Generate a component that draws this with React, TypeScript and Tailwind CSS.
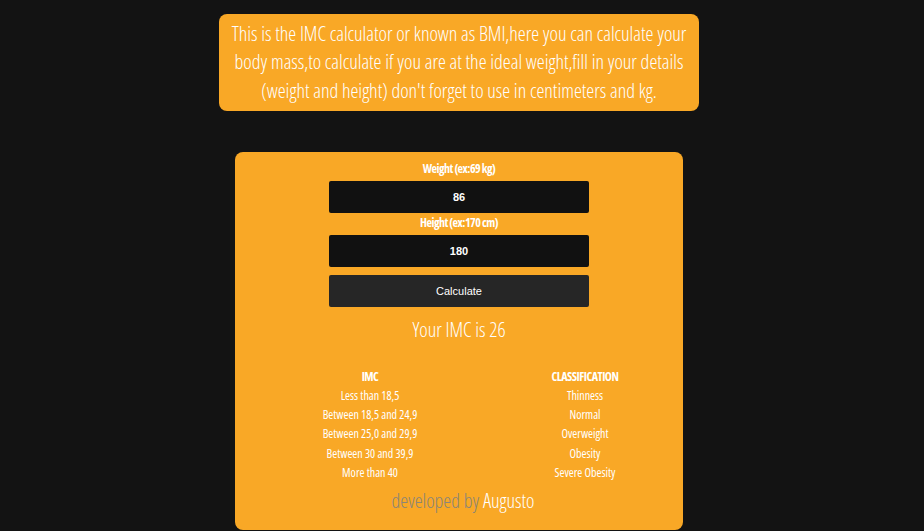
const rows = [
  ["Less than 18,5", "Thinness"],
  ["Between 18,5 and 24,9", "Normal"],
  ["Between 25,0 and 29,9", "Overweight"],
  ["Between 30 and 39,9", "Obesity"],
  ["More than 40", "Severe Obesity"],
];

const App = () => {
  return (
    <div className="min-h-[531px] bg-[#131313] flex flex-col items-center pt-[14px] pr-[6px] font-['Open_Sans','Noto_Sans',sans-serif] font-stretch-condensed text-white">
      {/* intro */}
      <div className="w-[480px] h-[97px] rounded-lg bg-[#f9a826] flex items-center justify-center px-2 text-center text-[20px] leading-[28.5px] font-light">
        <p>
          This is the IMC calculator or known as BMI,here you can calculate your body mass,to calculate if you are at the ideal weight,fill in your details (weight and height) don't forget to use in centimeters and kg.
        </p>
      </div>

      {/* calculator card */}
      <div className="mt-[41px] w-[448px] h-[378px] rounded-lg bg-[#f9a826] flex flex-col items-center pt-[9px]">
        <label className="text-[12px] leading-[16px] font-bold tracking-[-0.5px]">Weight (ex:69 kg)</label>
        <input
          defaultValue="86"
          className="mt-[4px] w-[260px] h-[32px] rounded-[2px] bg-[#111111] text-center text-[11px] font-bold text-white font-['Liberation_Sans',sans-serif] outline-none"
        />
        <label className="mt-[2px] text-[12px] leading-[16px] font-bold tracking-[-0.5px]">Height (ex:170 cm)</label>
        <input
          defaultValue="180"
          className="mt-[4px] w-[260px] h-[32px] rounded-[2px] bg-[#111111] text-center text-[11px] font-bold text-white font-['Liberation_Sans',sans-serif] outline-none"
        />
        <button className="mt-[8px] w-[260px] h-[32px] rounded-[2px] bg-[#262626] text-[11px] text-white font-['Liberation_Sans',sans-serif]">
          Calculate
        </button>

        <div className="mt-[9px] text-[20px] leading-[28px] font-light">Your IMC is 26</div>

        <div className="mt-[24px] self-start ml-[50px] grid grid-cols-[170px_130px] gap-x-[65px] text-center text-[12px]">
          <div className="font-bold leading-[18px] tracking-[-0.5px]">IMC</div>
          <div className="font-bold leading-[18px] tracking-[-0.5px]">CLASSIFICATION</div>
          {rows.map(([imc, cls]) => (
            <div key={imc} className="contents">
              <div className="leading-[19.2px]">{imc}</div>
              <div className="leading-[19.2px]">{cls}</div>
            </div>
          ))}
        </div>

        <div className="mt-[5px] ml-[8px] text-[20px] leading-[28px] font-light">
          <span className="text-[#8a8578]">developed by </span>
          <span>Augusto</span>
        </div>
      </div>
    </div>
  );
};

export default App;
